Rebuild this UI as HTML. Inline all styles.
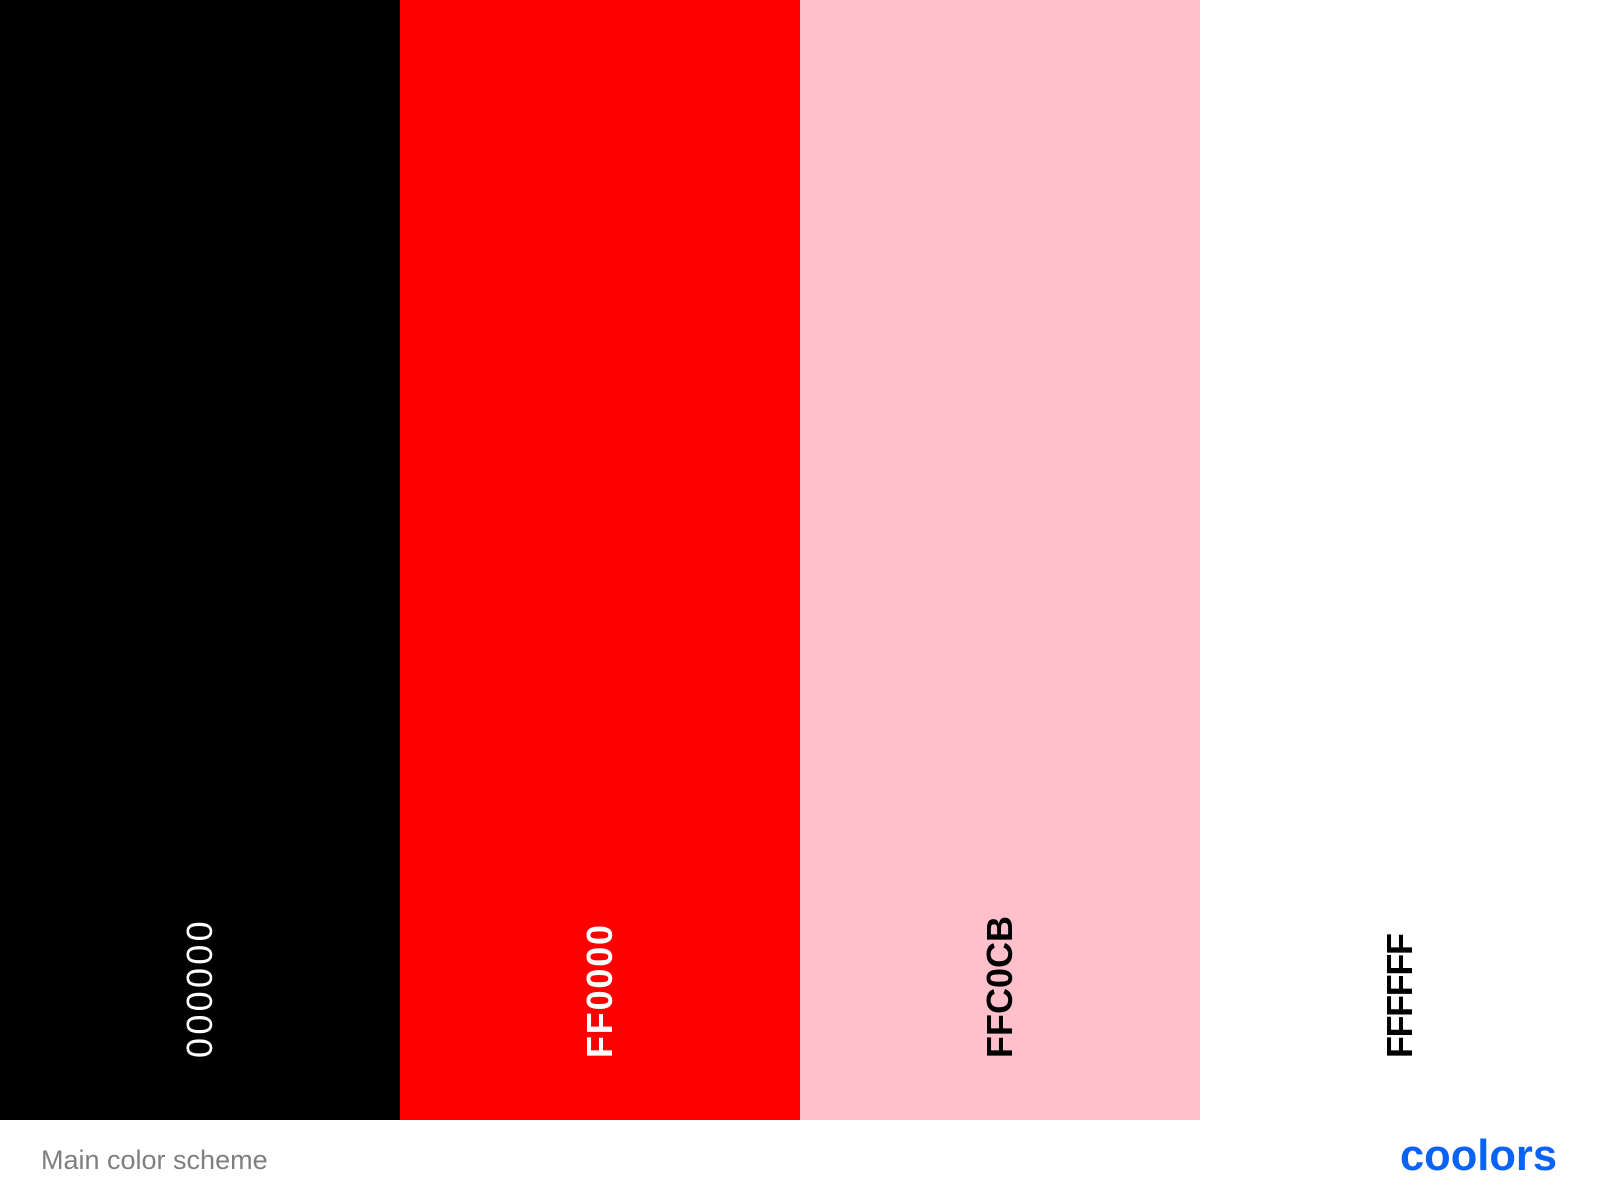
<!DOCTYPE html>
<html><head><meta charset="utf-8"><style>
html,body{margin:0;padding:0;width:1600px;height:1200px;background:#fff;overflow:hidden;font-family:"Liberation Sans",sans-serif}
.sw{position:absolute;top:0;width:400px;height:1120px}
.lab{position:absolute;left:200px;top:1058px;transform-origin:0 0;transform:rotate(-90deg) translateY(-50%);font-size:36px;font-weight:bold;white-space:nowrap;line-height:1}
.foot{position:absolute;left:41px;top:1145px;font-size:27px;color:#7f7f7f}
svg{position:absolute;left:0;top:0}
</style></head><body>
<div class="sw" style="left:0;background:#000"><div class="lab" style="color:#fff;font-weight:normal;letter-spacing:3.3px">000000</div></div>
<div class="sw" style="left:400px;background:#ff0000"><div class="lab" style="color:#fff;letter-spacing:1.8px">FF0000</div></div>
<div class="sw" style="left:800px;background:#ffc0cb"><div class="lab" style="color:#000">FFC0CB</div></div>
<div class="sw" style="left:1200px;background:#fff"><div class="lab" style="color:#000;letter-spacing:-1.4px">FFFFFF</div></div>
<div class="foot">Main color scheme</div>
<svg width="1600" height="1200"><text x="1400" y="1170" font-family="Liberation Sans" font-weight="bold" font-size="44" fill="#0b63f6" textLength="157" lengthAdjust="spacingAndGlyphs">coolors</text></svg>
</body></html>
